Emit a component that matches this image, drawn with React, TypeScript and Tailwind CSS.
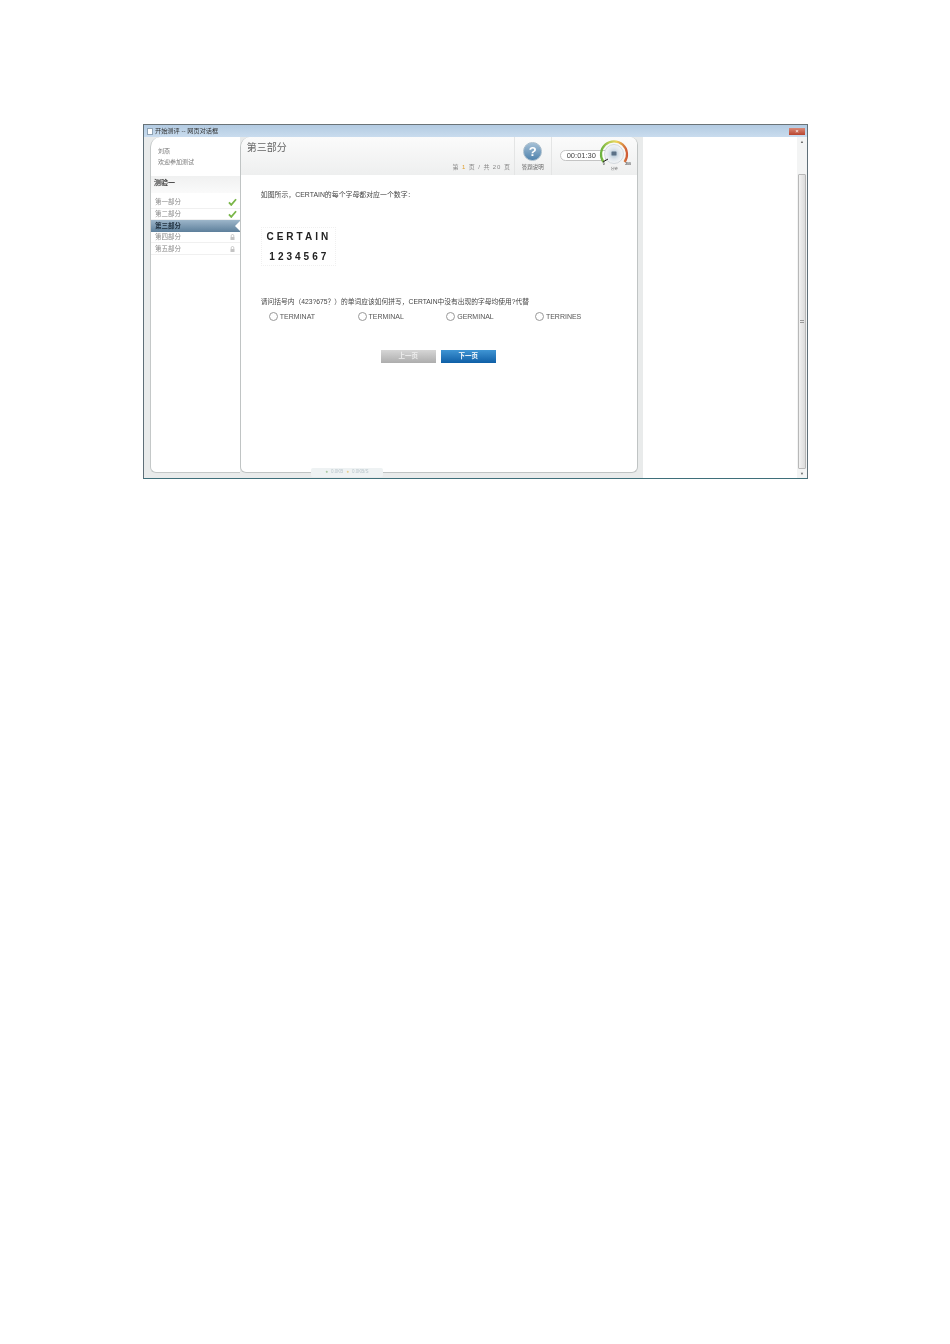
import React from 'react';

const FONT = "font-['Liberation_Sans','Noto_Sans_CJK_SC',sans-serif]";

const sections = [
  { name: '第一部分', state: 'done' },
  { name: '第二部分', state: 'done' },
  { name: '第三部分', state: 'active' },
  { name: '第四部分', state: 'locked' },
  { name: '第五部分', state: 'locked' },
];

const options = ['TERMINAT', 'TERMINAL', 'GERMINAL', 'TERRINES'];

const Check = () => (
  <svg width="9" height="8" viewBox="0 0 10 9">
    <path d="M1 5 L3.6 7.8 L9 1.4" fill="none" stroke="#7ab648" strokeWidth="2" />
  </svg>
);

const Lock = () => (
  <svg width="5" height="6" viewBox="0 0 5 6">
    <path d="M1.2 3 V1.8 a1.3 1.3 0 0 1 2.6 0 V3" fill="none" stroke="#b5b5b5" strokeWidth="0.7" />
    <rect x="0.5" y="3" width="4" height="3" fill="#c4c4c4" />
  </svg>
);

const Gauge = () => (
  <svg width="32" height="36" viewBox="0 0 32 36">
    <defs>
      <linearGradient id="arc" x1="0" y1="0" x2="1" y2="0">
        <stop offset="0" stopColor="#6cb33f" />
        <stop offset="0.3" stopColor="#b5cc55" />
        <stop offset="0.6" stopColor="#ecd55a" />
        <stop offset="1" stopColor="#cf5a35" />
      </linearGradient>
      <radialGradient id="dial">
        <stop offset="0" stopColor="#a9c0d2" />
        <stop offset="0.55" stopColor="#dfe6ec" />
        <stop offset="1" stopColor="#f4f6f7" />
      </radialGradient>
    </defs>
    <path d="M5.5 24 A13 13 0 1 1 26.5 24" fill="none" stroke="url(#arc)" strokeWidth="2.2" />
    <circle cx="16" cy="16" r="9.5" fill="url(#dial)" stroke="#c4ccd3" strokeWidth="0.7" />
    <rect x="13.5" y="13.5" width="5" height="4" rx="0.5" fill="#5b7186" />
    <path d="M10 21 L5 24" stroke="#222" strokeWidth="1" />
  </svg>
);

export default function App() {
  return (
    <div className={`${FONT} min-h-[1344px] bg-white pl-[143px] pt-[124px]`}>
      <div className="relative h-[355px] w-[665px] border border-[#5f6f78] border-t-[#6b7478] border-b-[#3f6f7a] bg-white blur-[0.35px]">
        {/* title bar */}
        <div className="flex h-[12px] items-center bg-gradient-to-b from-[#b3cbe2] to-[#c9dcee] pl-[3px]">
          <div className="mr-[2px] h-[7px] w-[6px] border border-[#8fa3b5] bg-white" />
          <span className="text-[6.2px] leading-none text-[#333]">开始测评 -- 网页对话框</span>
          <div className="ml-auto mr-[2px] flex h-[7px] w-[16px] items-center justify-center bg-gradient-to-b from-[#d98a78] to-[#b8432e] text-[6px] leading-none text-white">
            ×
          </div>
        </div>

        <div className="flex h-[341px]">
          {/* gray app area */}
          <div className="flex h-full w-[499px] bg-[#e9ebeb] pl-[6px] pr-[5px] pb-[5px]">
            {/* sidebar */}
            <div className="flex h-full w-[90px] flex-col rounded-bl-[6px] rounded-tl-[10px] border-b border-l border-[#c4c8c8] bg-white">
              <div className="h-[37px] pl-[7px] pt-[9px] text-[6px] leading-[10.5px] text-[#777]">
                <div>刘燕</div>
                <div>欢迎参加测试</div>
              </div>
              <div className="mt-[2px] h-[17px] bg-gradient-to-b from-[#f0f1f1] to-[#fafafa] pl-[3px] text-[7px] font-bold leading-[14px] text-[#444]">
                测验一
              </div>
              <div className="mt-[4px] flex flex-col">
                {sections.map((s) => (
                  <div
                    key={s.name}
                    className={
                      s.state === 'active'
                        ? 'relative flex h-[11.6px] items-center bg-gradient-to-b from-[#9db6ca] to-[#5d7f9b] pl-[4px] text-[6.5px] font-bold text-[#1c2c3a]'
                        : 'flex h-[11.6px] items-center justify-between border-b border-[#f0f0f0] pl-[4px] pr-[3px] text-[6.5px] text-[#888]'
                    }
                  >
                    <span>{s.name}</span>
                    {s.state === 'done' && <Check />}
                    {s.state === 'locked' && <span className="pr-[2px]"><Lock /></span>}
                    {s.state === 'active' && (
                      <div className="absolute right-0 top-[1px] h-0 w-0 border-y-[5px] border-r-[5px] border-y-transparent border-r-white" />
                    )}
                  </div>
                ))}
              </div>
            </div>

            {/* main panel */}
            <div className="flex h-full w-[399px] flex-col rounded-b-[6px] rounded-tl-[10px] rounded-tr-[8px] border-b border-l border-r border-[#c0c4c4] bg-white">
              <div className="flex h-[38px] rounded-tl-[10px] rounded-tr-[8px] bg-gradient-to-b from-[#fbfbfb] to-[#eeefef]">
                <div className="flex w-[273px] flex-col pl-[6px]">
                  <div className="pt-[4px] text-[10px] leading-[13px] text-[#666]">第三部分</div>
                  <div className="mt-auto pb-[4px] pr-[3px] text-right text-[6px] leading-[8px] tracking-[0.9px] text-[#888]">
                    第 <span className="text-[#e0a030]">1</span> 页 / 共 20 页
                  </div>
                </div>
                <div className="flex w-[38px] flex-col items-center border-x border-[#e4e5e5] pt-[5px]">
                  <div className="flex h-[19px] w-[19px] items-center justify-center rounded-full border border-[#a8bccb] bg-gradient-to-b from-[#a5c0d6] to-[#4f83ad] text-[13px] font-bold leading-none text-white">
                    ?
                  </div>
                  <div className="mt-[2px] text-[5.5px] leading-[8px] text-[#666]">答题说明</div>
                </div>
                <div className="relative flex-1 pl-[8px] pt-[13px]">
                  <div className="flex h-[11px] w-[46px] items-center justify-center rounded-l-full border border-[#c4c4c4] bg-white pr-[3px] text-[7.5px] leading-none text-[#444]">
                    00:01:30
                  </div>
                  <div className="absolute right-[7px] top-[1px]">
                    <Gauge />
                  </div>
                  <div className="absolute left-[51px] top-[26px] text-[3.5px] font-bold leading-none text-[#555]">0</div>
                  <div className="absolute right-[6px] top-[26px] text-[3.5px] font-bold leading-none text-[#555]">200</div>
                  <div className="absolute left-[59px] top-[31px] text-[3.5px] leading-none text-[#666]">分钟</div>
                </div>
              </div>

              <div className="flex flex-1 flex-col pl-[20px]">
                <p className="mt-[15px] text-[6.9px] leading-[9px] text-[#444]">
                  如图所示，CERTAIN的每个字母都对应一个数字：
                </p>
                <div className="mt-[28px] flex h-[39px] w-[75px] flex-col items-center justify-center gap-[10px] border border-dotted border-[#f0f0f0] text-[10px] font-bold leading-[10px] text-[#222]">
                  <div className="pl-[1px] tracking-[3px]">CERTAIN</div>
                  <div className="pl-[2px] tracking-[3px]">1234567</div>
                </div>
                <p className="mt-[31px] text-[6.75px] leading-[9px] text-[#444]">
                  请问括号内（423?675？）的单词应该如何拼写，CERTAIN中没有出现的字母均使用?代替
                </p>
                <div className="mt-[6px] flex pl-[8px]">
                  {options.map((o) => (
                    <label key={o} className="flex w-[88.7px] items-center text-[7px] leading-none text-[#555]">
                      <span className="mr-[2px] h-[9px] w-[9px] rounded-full border border-[#999] bg-white" />
                      {o}
                    </label>
                  ))}
                </div>
                <div className="mt-[29px] flex gap-[5px] pl-[120px]">
                  <button className="h-[13px] w-[55px] bg-gradient-to-b from-[#d6d6d6] to-[#adadad] text-[6.5px] font-bold leading-none text-[#eee]">
                    上一页
                  </button>
                  <button className="h-[13px] w-[55px] bg-gradient-to-b from-[#3f95d4] to-[#0d5fa6] text-[6.5px] font-bold leading-none text-white">
                    下一页
                  </button>
                </div>
              </div>
            </div>
          </div>

          {/* white page + scrollbar */}
          <div className="flex-1 bg-white" />
          <div className="flex h-full w-[10px] flex-col items-center bg-[#f3f4f4]">
            <div className="h-[9px] text-[4px] leading-[9px] text-[#666]">▲</div>
            <div className="mt-[28px] flex w-[8px] flex-1 items-center justify-center rounded-[1px] border border-[#b8b8b8] bg-gradient-to-r from-[#f2f2f2] to-[#dcdcdc]">
              <div className="h-[3px] w-[4px] border-y border-[#999]" />
            </div>
            <div className="h-[9px] text-[4px] leading-[9px] text-[#666]">▼</div>
          </div>
        </div>

        {/* faint status overlay */}
        <div className="absolute bottom-[1px] left-[167px] flex h-[9px] w-[72px] items-center justify-center gap-[3px] rounded-[2px] bg-[#eef2f3] text-[4.5px] leading-none text-[#b9c6cc]">
          <span className="text-[#a8c8a0]">●</span> 0.0KB <span className="text-[#e8d090]">●</span> 0.0KB/S
        </div>
      </div>
    </div>
  );
}
